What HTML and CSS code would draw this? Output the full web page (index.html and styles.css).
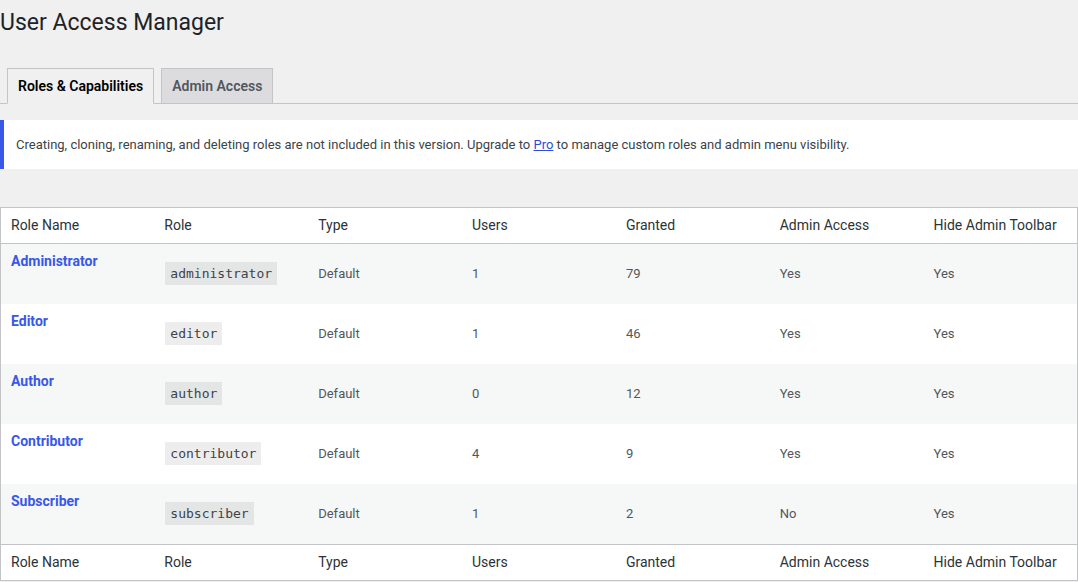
FILE: index.html
```html
<!DOCTYPE html>
<html lang="en">

<head>
    <meta charset="UTF-8" />
    <meta name="viewport" content="width=device-width, initial-scale=1.0" />
    <title>User Access Manager</title>

    <link rel="stylesheet" href="styles.css">
</head>

<body>
    <main class="wrap">
        <h1 class="page-title">User Access Manager</h1>

        <nav class="nav-tab-wrapper">
            <a href="#" class="nav-tab nav-tab-active">Roles &amp; Capabilities</a>
            <a href="#" class="nav-tab">Admin Access</a>
        </nav>

        <div class="notice">
            <p>Creating, cloning, renaming, and deleting roles are not included in this version. Upgrade to <a href="#" class="pro-link">Pro</a> to manage custom roles and admin menu visibility.</p>
        </div>

        <table class="roles-table">
            <thead>
                <tr>
                    <th>Role Name</th>
                    <th>Role</th>
                    <th>Type</th>
                    <th>Users</th>
                    <th>Granted</th>
                    <th>Admin Access</th>
                    <th>Hide Admin Toolbar</th>
                </tr>
            </thead>
            <tbody id="role-rows"></tbody>
            <tfoot>
                <tr>
                    <th>Role Name</th>
                    <th>Role</th>
                    <th>Type</th>
                    <th>Users</th>
                    <th>Granted</th>
                    <th>Admin Access</th>
                    <th>Hide Admin Toolbar</th>
                </tr>
            </tfoot>
        </table>
    </main>

    <script>
        const roles = [
            { name: "Administrator", slug: "administrator", users: 1, granted: 79, admin: "Yes", toolbar: "Yes" },
            { name: "Editor", slug: "editor", users: 1, granted: 46, admin: "Yes", toolbar: "Yes" },
            { name: "Author", slug: "author", users: 0, granted: 12, admin: "Yes", toolbar: "Yes" },
            { name: "Contributor", slug: "contributor", users: 4, granted: 9, admin: "Yes", toolbar: "Yes" },
            { name: "Subscriber", slug: "subscriber", users: 1, granted: 2, admin: "No", toolbar: "Yes" }
        ];

        const tbody = document.getElementById("role-rows");
        roles.forEach((role) => {
            const tr = document.createElement("tr");
            tr.innerHTML = `
                <td class="col-name"><a href="#" class="role-link">${role.name}</a></td>
                <td><code>${role.slug}</code></td>
                <td>Default</td>
                <td>${role.users}</td>
                <td>${role.granted}</td>
                <td>${role.admin}</td>
                <td>${role.toolbar}</td>`;
            tbody.appendChild(tr);
        });
    </script>
</body>

</html>
```

FILE: styles.css
```css
body {
    margin: 0;
    background: #f0f0f1;
    color: #3c434a;
    font-family: Roboto, "Liberation Sans", sans-serif;
    font-size: 13px;
}

.wrap {
    width: 1078px;
}

.page-title {
    margin: 0;
    padding: 8px 0 4px;
    font-size: 23px;
    font-weight: 400;
    line-height: 1.3;
    color: #1d2327;
}

.nav-tab-wrapper {
    margin-top: 26px;
    border-bottom: 1px solid #c3c4c7;
    display: flex;
    height: 35px;
    align-items: flex-end;
}

.nav-tab {
    margin-left: 7px;
    margin-bottom: -1px;
    padding: 5px 10px;
    border: 1px solid #c3c4c7;
    background: #dcdcde;
    color: #50575e;
    font-size: 14px;
    font-weight: 600;
    line-height: 24px;
    text-decoration: none;
}

.nav-tab-active {
    background: #f0f0f1;
    color: #000;
    border-bottom-color: #f0f0f1;
}

.notice {
    margin-top: 16px;
    background: #fff;
    border-left: 4px solid #3858e9;
    padding: 15px 12px;
}

.notice p {
    margin: 0;
    line-height: 19px;
    color: #3c434a;
}

.pro-link {
    color: #2b4bde;
}

.roles-table {
    margin-top: 38px;
    width: 1078px;
    border-collapse: collapse;
    border: 1px solid #c3c4c7;
    background: #fff;
    table-layout: fixed;
}

.roles-table th {
    text-align: left;
    font-weight: 400;
    font-size: 14px;
    line-height: 19px;
    padding: 8px 10px;
    color: #2c3338;
    height: 19px;
}

.roles-table thead tr {
    border-bottom: 1px solid #c3c4c7;
}

.roles-table tfoot tr {
    border-top: 1px solid #c3c4c7;
}

.roles-table td {
    padding: 8px 10px;
    height: 44px;
    vertical-align: middle;
    color: #50575e;
    line-height: 19px;
}

.roles-table tbody tr:nth-child(odd) {
    background: #f6f7f7;
}

.roles-table td.col-name {
    vertical-align: top;
}

.role-link {
    color: #3858e9;
    font-weight: 700;
    font-size: 14px;
    text-decoration: none;
}

code {
    display: inline-block;
    margin-left: 1px;
    font-family: "DejaVu Sans Mono", monospace;
    font-size: 13px;
    line-height: 18px;
    padding: 3px 5px 2px;
    background: rgba(0, 0, 0, 0.07);
    color: #3c434a;
}
```
